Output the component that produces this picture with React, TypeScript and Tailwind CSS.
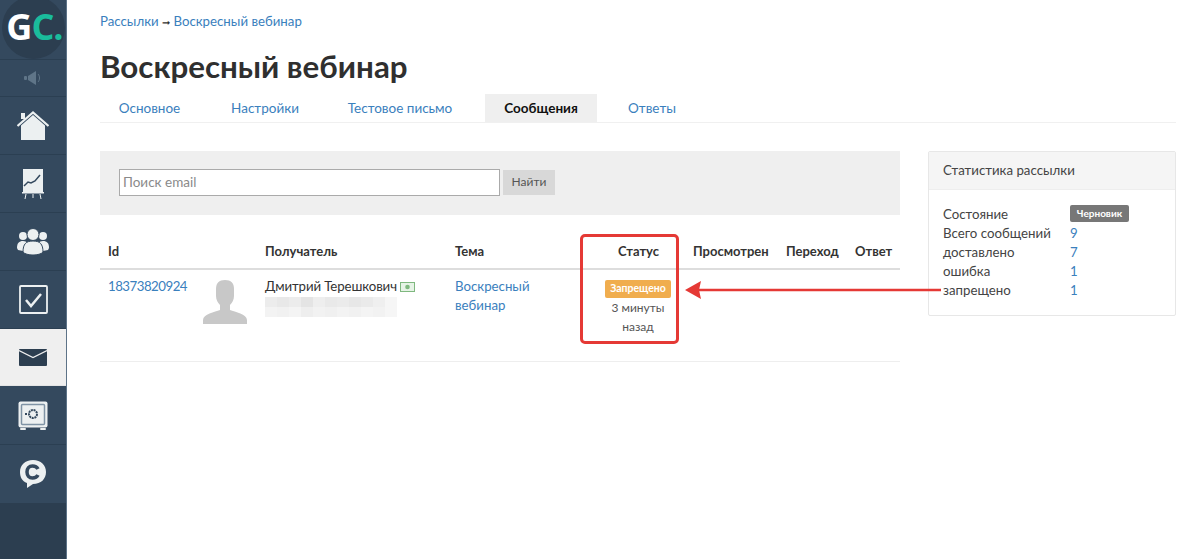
import { ReactNode } from "react";

const Row = ({ active, h, children }: { active?: boolean; h: string; children: ReactNode }) => (
  <div className={`${h} flex items-center justify-center border-b ${active ? "bg-[#efefef] border-[#e4e4e4]" : "border-[#2b3f52]"}`}>
    {children}
  </div>
);

const Sidebar = () => (
  <aside className="w-[67px] shrink-0 min-h-[559px] bg-[#2c3e50] border-r border-[#5d7388] flex flex-col">
    <div className="bg-[#34495e]">
      <div className="h-[60px] flex items-center justify-center border-b border-[#2b3f52] overflow-hidden">
        <div className="w-[63px] h-[63px] -mt-[5px] rounded-full bg-[#2c3e50] flex items-center justify-center pl-[3px] text-[36px] font-bold tracking-[-1px] leading-none font-['Open_Sans',sans-serif]">
          <span className="text-white">G</span>
          <span className="text-[#1abc9c]">C.</span>
        </div>
      </div>
      <Row h="h-[37px]">
        <svg width="20" height="14" viewBox="0 0 20 14" fill="#5f7588">
          <rect x="1" y="5" width="3" height="4" rx="1" />
          <path d="M5 5l8-5v14l-8-5z" />
          <path d="M15 3c2 2 2 6 0 8" fill="none" stroke="#5f7588" />
        </svg>
      </Row>
      <Row h="h-[58px]">
        <svg width="32" height="30" viewBox="0 0 32 30" fill="#ecf0f1">
          <path d="M4 14.5L16 4l12 10.5V29H4z" />
          <path d="M0.5 15L16 1.5 31.500 15" fill="none" stroke="#ecf0f1" strokeWidth="2.200" />
          <rect x="4" y="2" width="4" height="6" />
        </svg>
      </Row>
      <Row h="h-[58px]">
        <svg width="22" height="30" viewBox="0 0 22 30">
          <rect x="1" y="0" width="20" height="23" fill="#ecf0f1" />
          <path d="M2 17l4-4 3 1 4-2 5-6" fill="none" stroke="#34495e" strokeWidth="1.500" />
          <rect x="0" y="23" width="22" height="1.500" fill="#ecf0f1" />
          <path d="M4 25l-1 5M11 25v4M18 25l1 5" stroke="#ecf0f1" strokeWidth="1" />
        </svg>
      </Row>
      <Row h="h-[58px]">
        <svg width="34" height="28" viewBox="0 0 34 28" fill="#ecf0f1">
          <circle cx="7" cy="8" r="4" />
          <circle cx="27" cy="8" r="4" />
          <path d="M1 20c0-5 2-7 6-7s6 3 6 7l-1 4-10-2z" />
          <path d="M33 20c0-5-2-7-6-7s-6 3-6 7l1 4 10-2z" />
          <circle cx="17" cy="6.500" r="6" stroke="#34495e" />
          <path d="M7 24c0-8 3-11 10-11s10 3 10 11c-3 4-17 4-20 0z" stroke="#34495e" />
        </svg>
      </Row>
      <Row h="h-[58px]">
        <svg width="29" height="29" viewBox="0 0 29 29" fill="none" stroke="#ecf0f1">
          <rect x="1" y="1" width="27" height="27" rx="1" strokeWidth="1.800" />
          <path d="M7 15l5 6 10-12" strokeWidth="2.500" />
        </svg>
      </Row>
      <Row h="h-[57px]" active>
        <svg width="28" height="17" viewBox="0 0 28 17">
          <path d="M1 0h26a1 1 0 0 1 1 1v15a1 1 0 0 1-1 1H1a1 1 0 0 1-1-1V1a1 1 0 0 1 1-1z" fill="#2c3e50" />
          <path d="M0 1.500l14 7 14-7" fill="none" stroke="#efefef" strokeWidth="1.200" />
        </svg>
      </Row>
      <Row h="h-[59px]">
        <svg width="30" height="29" viewBox="0 0 30 29">
          <rect x="0.500" y="0.500" width="29" height="26" rx="2" fill="#ecf0f1" />
          <rect x="2" y="27" width="6" height="2" rx="1" fill="#ecf0f1" />
          <rect x="22" y="27" width="6" height="2" rx="1" fill="#ecf0f1" />
          <rect x="3.500" y="3.500" width="23" height="20" rx="1" fill="#ecf0f1" stroke="#7f93a5" strokeWidth="1.500" />
          <circle cx="15" cy="13" r="4" fill="none" stroke="#34495e" strokeWidth="2" strokeDasharray="2 0.700" />
          <rect x="7" y="12" width="2" height="2" fill="#34495e" />
        </svg>
      </Row>
      <div className="h-[58px] flex items-center justify-center">
        <svg width="28" height="30" viewBox="0 0 28 30">
          <path d="M14 1c8 0 13 5 13 12s-5 12-13 12l-6 4 0-5C3 22 1 18 1 13 1 6 6 1 14 1z" fill="#ecf0f1" />
          <path d="M19 10c-1-2-3-3-5.500-3C10 7 8 9.500 8 13s2 6 5.500 6c2.500 0 4.500-1 5.500-3" fill="none" stroke="#34495e" strokeWidth="3.500" />
        </svg>
      </div>
    </div>
  </aside>
);

const Tabs = () => (
  <div className="flex h-[28px] border-b border-[#f0f0f0] text-[13.5px] mt-[9px] box-content">
    <a className="text-[#3a80bd] w-[99px] text-center leading-[28px]">Основное</a>
    <a className="text-[#3a80bd] w-[132px] text-center leading-[28px]">Настройки</a>
    <a className="text-[#3a80bd] w-[138px] mr-[16px] text-center leading-[28px]">Тестовое письмо</a>
    <a className="bg-[#efefef] text-[#111] font-bold w-[112px] text-center leading-[28px]">Сообщения</a>
    <a className="text-[#3a80bd] w-[110px] text-center leading-[28px]">Ответы</a>
  </div>
);

// размытый email в строке получателя
const blurTop = ["#ececec", "#e8e8e8", "#ececec", "#e4e4e4", "#eeeeee", "#e9e9e9", "#ebebeb", "#e7e7e7", "#eaeaea", "#efefef", "#f6f6f6"];
const blurBottom = ["#f3f3f3", "#f1f1f1", "#f4f4f4", "#eeeeee", "#f2f2f2", "#f0f0f0", "#f3f3f3", "#f1f1f1", "#f4f4f4", "#f2f2f2", "#f6f6f6"];

const BlurredEmail = () => (
  <div className="w-[132px] mt-[1px]">
    {[blurTop, blurBottom].map((line, i) => (
      <div key={i} className="flex h-[10px]">
        {line.map((color, j) => (
          <div key={j} className="flex-1" style={{ backgroundColor: color }} />
        ))}
      </div>
    ))}
  </div>
);

const Table = () => (
  <div className="text-[13.25px] text-[#333] mt-[18px]">
    <div className="grid grid-cols-[157px_190px_125px_113px_93px_69px_45px] h-[37px] border-b-2 border-[#ddd] font-bold text-[13px] pl-[8px] pt-[2px] items-center">
      <div>Id</div>
      <div>Получатель</div>
      <div>Тема</div>
      <div className="text-right pr-[34px]">Статус</div>
      <div>Просмотрен</div>
      <div>Переход</div>
      <div>Ответ</div>
    </div>
    <div className="grid grid-cols-[95px_62px_190px_125px_113px] h-[92px] border-b border-[#eee] pl-[8px] pt-[7px]">
      <a className="text-[#3a80bd] leading-[19px] tracking-[-0.5px]">18373820924</a>
      <div className="pt-[3px]">
        <svg width="44" height="44" viewBox="0 0 44 44" fill="#c8c8c8">
          <path d="M22 0c6 0 9 3 9 9v7c0 4-2 7-4 9v5c5 2 17 4 17 10v4H0v-4c0-6 12-8 17-10v-5c-2-2-4-5-4-9V9c0-6 3-9 9-9z" />
        </svg>
      </div>
      <div>
        <div className="flex items-center gap-[3px] leading-[19px]">
          <span className="tracking-[-0.1px]">Дмитрий Терешкович</span>
          <svg width="15" height="10" viewBox="0 0 15 10">
            <rect x="0.500" y="0.500" width="14" height="9" fill="#e6f3e6" stroke="#7fb87f" />
            <circle cx="7.500" cy="5" r="2.300" fill="#7fb87f" />
          </svg>
        </div>
        <BlurredEmail />
      </div>
      <a className="text-[#3a80bd] leading-[19px] w-[90px]">Воскресный вебинар</a>
      <div className="flex flex-col items-center pl-[3px]">
        <span className="bg-[#f0ad4e] text-white font-bold text-[10.5px] rounded-[2px] h-[18px] w-[66px] flex items-center justify-center mt-[3px]">
          Запрещено
        </span>
        <span className="text-[12px] leading-[19px] text-[#555] text-center w-[60px]">3 минуты назад</span>
      </div>
    </div>
  </div>
);

const stats: [string, string][] = [
  ["Всего сообщений", "9"],
  ["доставлено", "7"],
  ["ошибка", "1"],
  ["запрещено", "1"],
];

const StatsPanel = () => (
  <div className="w-[248px] h-[165px] border border-[#e7e7e7] rounded-[2px] text-[13.25px] text-[#444]">
    <div className="h-[38px] bg-[#f5f5f5] border-b border-[#eee] px-[14px] flex items-center">Статистика рассылки</div>
    <div className="px-[14px] pt-[15px] leading-[19px]">
      <div className="flex">
        <span className="w-[127px]">Состояние</span>
        <span className="bg-[#777] text-white font-bold text-[10px] rounded-[2px] h-[17px] w-[59px] flex items-center justify-center">Черновик</span>
      </div>
      {stats.map(([label, value]) => (
        <div key={label} className="flex">
          <span className="w-[127px]">{label}</span>
          <a className="text-[#3a80bd]">{value}</a>
        </div>
      ))}
    </div>
  </div>
);

export default function App() {
  return (
    <div className="relative flex h-[559px] overflow-hidden bg-white font-['Lato','Open_Sans',sans-serif]">
      <Sidebar />
      <main className="flex-1 pl-[33px] pr-[23px]">
        <div className="pt-[12px] text-[13.25px] leading-[18px] text-[#3a80bd]">
          Рассылки <span className="text-[#333] text-[10px]">➞</span> Воскресный вебинар
        </div>
        <h1 className="mt-[16px] text-[31.3px] leading-[38px] font-bold text-[#2f2f2f]">Воскресный вебинар</h1>
        <Tabs />
        <div className="flex gap-[28px] mt-[28px]">
          <div className="w-[800px]">
            <div className="h-[64px] bg-[#efefef] flex items-center pl-[19px] gap-[3px] pb-[2px]">
              <input
                placeholder="Поиск email"
                className="w-[381px] h-[27px] bg-white border border-[#aaa] px-[3px] text-[13.5px] placeholder:text-[#8a8a8a] outline-none"
              />
              <button className="w-[52px] h-[25px] bg-[#d8d8d8] text-[#555] text-[12px]">Найти</button>
            </div>
            <Table />
          </div>
          <StatsPanel />
        </div>
      </main>
      <div className="absolute left-[580px] top-[234px] w-[99px] h-[110px] border-[3px] border-[#e53935] rounded-[5px]" />
      <svg className="absolute left-[685px] top-[280px]" width="260" height="20" viewBox="0 0 260 20">
        <path d="M256 10H14" stroke="#e53935" strokeWidth="2.500" />
        <path d="M0 10l16-9-2 9 2 9z" fill="#e53935" />
      </svg>
    </div>
  );
}
